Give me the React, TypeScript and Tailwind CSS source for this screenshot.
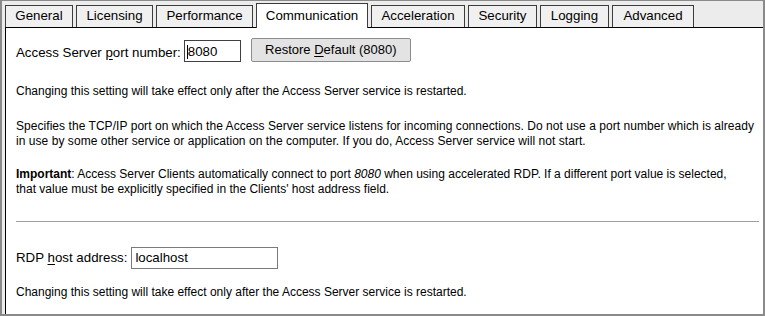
import React from 'react';

const tabs = [
  { label: 'General', w: 'w-[68px]' },
  { label: 'Licensing', w: 'w-[77px]' },
  { label: 'Performance', w: 'w-[97px]' },
  { label: 'Communication', w: 'w-[112px]', active: true },
  { label: 'Acceleration', w: 'w-[94px]' },
  { label: 'Security', w: 'w-[69px]' },
  { label: 'Logging', w: 'w-[69px]' },
  { label: 'Advanced', w: 'w-[82px]' },
];

const App: React.FC = () => {
  return (
    <div className="w-[765px] h-[316px] bg-[#ececec] border-t border-x-2 border-b-2 border-[#8a8a8a] flex flex-col font-['Liberation_Sans',Arial,sans-serif] text-black overflow-hidden">
      {/* tab strip */}
      <div className="flex items-end gap-[3px] pl-[3px] h-[26px] shrink-0">
        {tabs.map(t =>
          t.active ? (
            <div
              key={t.label}
              className={`${t.w} h-[25px] -mb-px relative z-10 bg-white border border-b-0 border-[#3c3c3c] pt-[2px] text-center text-[13.3px] leading-[20px]`}
            >
              {t.label}
            </div>
          ) : (
            <div
              key={t.label}
              className={`${t.w} h-[22px] bg-[#f0f0f0] border border-b-0 border-[#3c3c3c] text-center text-[13.3px] leading-[20px]`}
            >
              {t.label}
            </div>
          )
        )}
      </div>

      {/* page */}
      <div className="flex-1 ml-[3px] bg-white border-l border-t border-black pl-[10px] pt-[10px]">
        <div className="flex items-end h-[24px]">
          <span className="text-[13.3px] leading-[16px] mb-px whitespace-nowrap">
            Access Server <span className="underline underline-offset-2">p</span>ort number:
          </span>
          <div className="ml-[3px] w-[57px] h-[22px] border border-[#404040] bg-white flex items-start pl-[2px] pt-px text-[13.3px] leading-[20px]">
            <span className="w-px h-[14px] bg-black mt-[3px] -mr-px shrink-0" />
            <span className="pl-px">8080</span>
          </div>
          <button className="ml-[10px] w-[160px] h-[24px] border border-[#8c8c8c] rounded-[2px] bg-[#e3e3e3] text-[13px] leading-[20px] text-center">
            Restore <span className="underline underline-offset-2">D</span>efault (8080)
          </button>
        </div>

        <p className="mt-[22px] text-[12px] leading-[15px] whitespace-nowrap">
          Changing this setting will take effect only after the Access Server service is restarted.
        </p>

        <p className="mt-[20px] text-[12px] leading-[15px] tracking-[0.05px] whitespace-nowrap">
          Specifies the TCP/IP port on which the Access Server service listens for incoming connections. Do not use a port number which is already
          <br />
          in use by some other service or application on the computer. If you do, Access Server service will not start.
        </p>

        <p className="mt-[18px] text-[12px] leading-[15px] whitespace-nowrap">
          <span className="font-bold">Important</span>: Access Server Clients automatically connect to port <i>8080</i> when using accelerated RDP. If a different port value is selected,
          <br />
          that value must be explicitly specified in the Clients' host address field.
        </p>

        <div className="mt-[24px] w-[743px] h-px bg-[#a0a0a0]" />

        <div className="mt-[25px] flex items-center h-[22px]">
          <span className="text-[13.3px] leading-[16px] whitespace-nowrap">
            RDP <span className="underline underline-offset-2">h</span>ost address:
          </span>
          <div className="ml-[4px] w-[147px] h-[22px] border border-[#7a7a7a] bg-white pl-[3px] text-[13.3px] leading-[20px]">
            localhost
          </div>
        </div>

        <p className="mt-[16px] text-[12px] leading-[15px] whitespace-nowrap">
          Changing this setting will take effect only after the Access Server service is restarted.
        </p>
      </div>
    </div>
  );
};

export default App;
